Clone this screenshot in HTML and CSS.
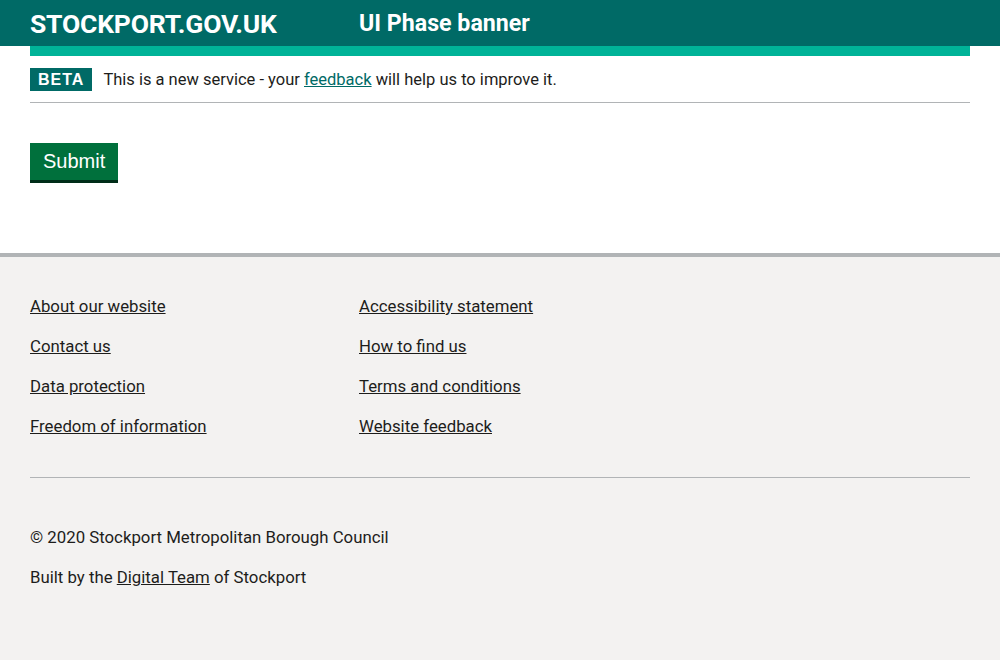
FILE: index.html
```html
<!DOCTYPE html>
<html lang="en">
<head>
<meta charset="utf-8">
<title>UI Phase banner</title>
<link rel="stylesheet" href="styles.css">
</head>
<body>
<header class="header">
  <div class="header-inner">
    <a class="logo" href="#">STOCKPORT.GOV.UK</a>
    <span class="service">UI Phase banner</span>
  </div>
</header>
<div class="container">
  <div class="accent"></div>
  <div class="phase-banner">
    <strong class="tag">BETA</strong>
    <span class="phase-text">This is a new service - your <a href="#">feedback</a> will help us to improve it.</span>
  </div>
  <main class="main">
    <button class="button">Submit</button>
  </main>
</div>
<footer class="footer">
  <div class="footer-inner">
    <ul class="footer-links">
      <li><a href="#">About our website</a></li>
      <li><a href="#">Accessibility statement</a></li>
      <li><a href="#">Contact us</a></li>
      <li><a href="#">How to find us</a></li>
      <li><a href="#">Data protection</a></li>
      <li><a href="#">Terms and conditions</a></li>
      <li><a href="#">Freedom of information</a></li>
      <li><a href="#">Website feedback</a></li>
    </ul>
    <hr class="footer-rule">
    <p class="meta">© 2020 Stockport Metropolitan Borough Council</p>
    <p class="meta">Built by the <a href="#">Digital Team</a> of Stockport</p>
  </div>
</footer>
</body>
</html>
```

FILE: styles.css
```css
* { box-sizing: border-box; }
html, body { margin: 0; padding: 0; }
body {
  font-family: "Roboto", "Liberation Sans", sans-serif;
  color: #1d1d1b;
  background: #fff;
}
.header {
  background: #006a66;
  height: 46px;
}
.header-inner {
  padding: 0 30px;
  display: flex;
  align-items: center;
  height: 46px;
}
.logo {
  color: #fff;
  text-decoration: none;
  font-weight: 700;
  font-size: 26.5px;
  letter-spacing: -0.2px;
  width: 329px;
}
.service {
  color: #fff;
  font-weight: 700;
  font-size: 23.2px;
}
.container {
  padding: 0 30px;
}
.accent {
  height: 10px;
  background: #00b398;
}
.phase-banner {
  display: flex;
  align-items: center;
  padding: 12px 0 11px;
  border-bottom: 1px solid #b1b4b6;
}
.tag {
  background: #006a66;
  color: #fff;
  font-family: "Liberation Sans", Arial, sans-serif;
  font-weight: 700;
  font-size: 16px;
  letter-spacing: 1px;
  padding: 3px 8px 2px;
  line-height: 18px;
  margin-right: 11px;
}
.phase-text {
  font-size: 16.5px;
  line-height: 22px;
  color: #1d1d1b;
}
.phase-text a { color: #006a66; }
.main {
  padding: 40px 0 70px;
}
.button {
  font-family: "Liberation Sans", Arial, sans-serif;
  font-size: 20px;
  line-height: 21px;
  color: #fff;
  background: #00703c;
  border: 0;
  box-shadow: 0 3px 0 #002d18;
  padding: 8px 13px;
  margin: 0 0 3px;
}
.footer {
  background: #f3f2f1;
  border-top: 4px solid #b1b4b6;
  padding: 37px 30px 60px;
}
.footer-links {
  list-style: none;
  margin: 0;
  padding: 0;
  display: grid;
  grid-template-columns: 329px 1fr;
  row-gap: 16px;
}
.footer-links li {
  font-size: 16.8px;
  line-height: 24px;
}
.footer-links a { color: #1d1d1b; }
.footer-rule {
  border: 0;
  border-top: 1px solid #b1b4b6;
  margin: 39px 0 47px;
}
.meta {
  margin: 0 0 16px;
  font-size: 16.8px;
  line-height: 24px;
}
.meta a { color: #1d1d1b; }
```
